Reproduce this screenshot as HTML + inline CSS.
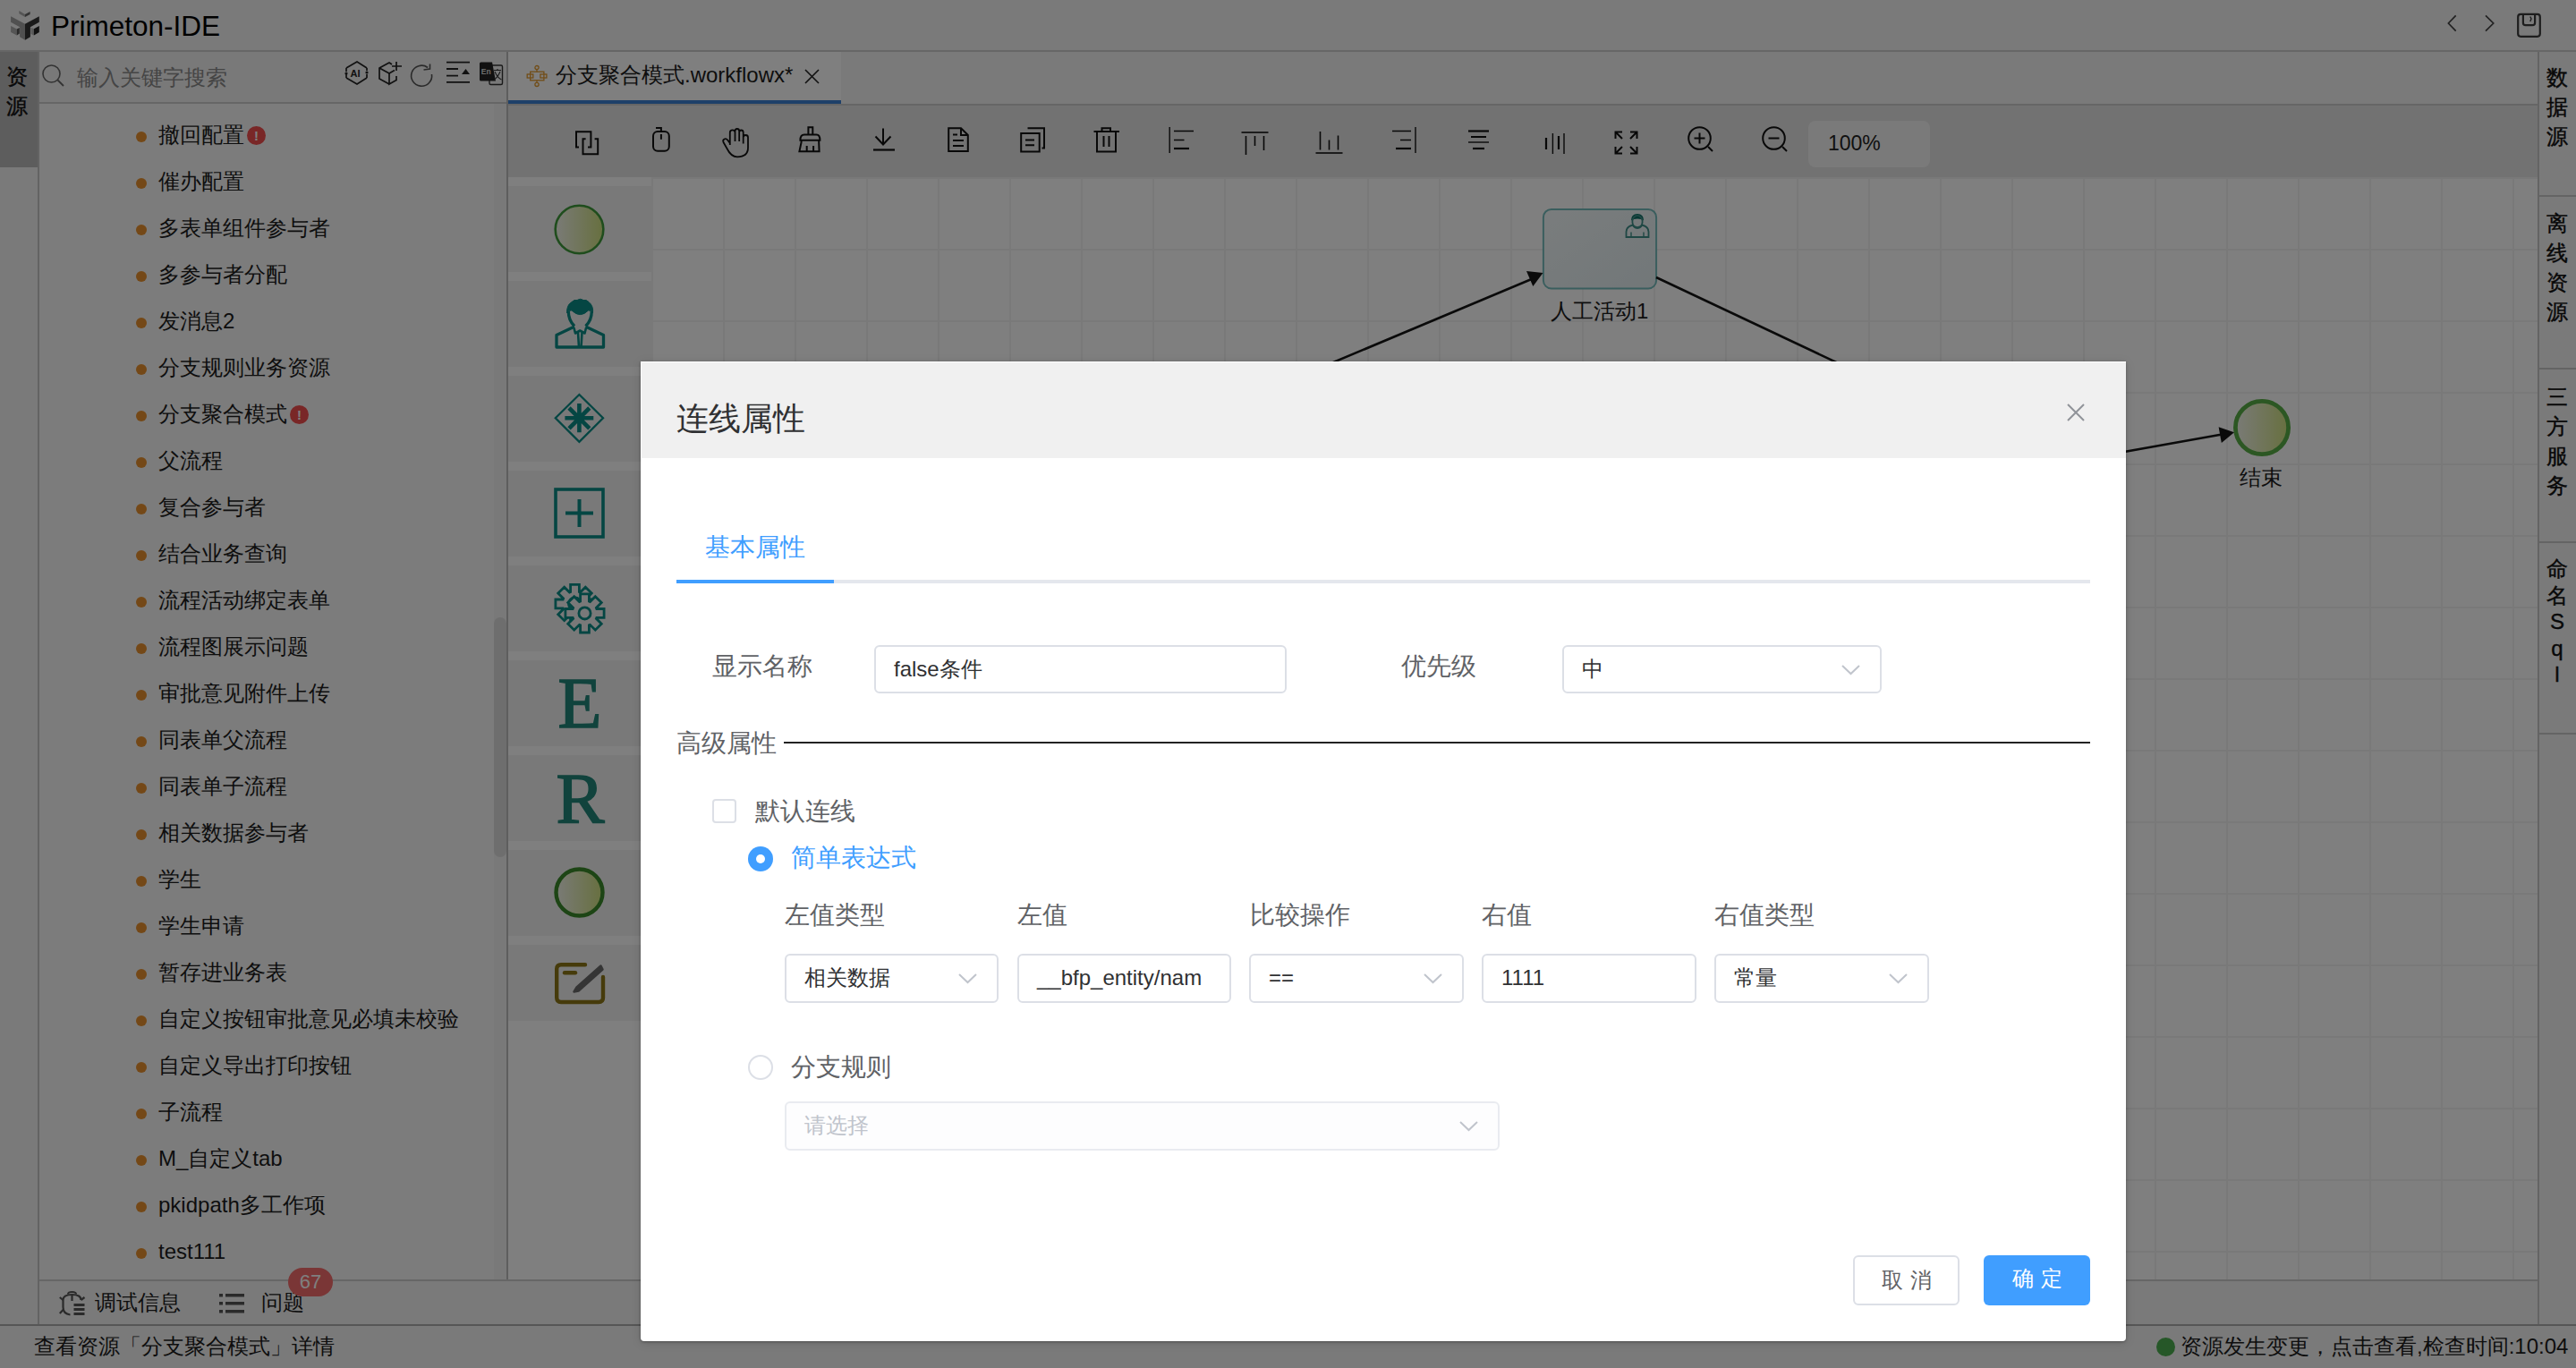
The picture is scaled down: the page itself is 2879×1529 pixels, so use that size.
<!DOCTYPE html>
<html><head><meta charset="utf-8">
<style>
*{box-sizing:border-box}
html,body{margin:0;padding:0}
body{width:2879px;height:1529px;overflow:hidden;position:relative;background:#f4f4f4;font-family:"Liberation Sans",sans-serif;color:#222}
.a{position:absolute}
.nw{white-space:nowrap}
svg{position:absolute;overflow:visible}
#title{left:0;top:0;width:2879px;height:58px;background:#f4f4f4;border-bottom:2px solid #cdcdcd}
#ltabs{left:0;top:58px;width:44px;height:1422px;background:#f4f4f4;border-right:2px solid #c6c6c6}
#ltab1{left:0;top:58px;width:42px;height:129px;background:#bababa}
.vt{font-size:24px;line-height:33px;width:42px;text-align:center;color:#111;-webkit-text-stroke:0.4px #111}
#lpanel{left:44px;top:58px;width:522px;height:1372px;background:#f8f8f8}
#search{left:44px;top:58px;width:522px;height:58px;background:#f2f2f2;border-bottom:2px solid #cdcdcd}
.ph{font-size:24px;color:#8a8a8a;line-height:32px}
.ti{left:152px;font-size:24px;line-height:32px;color:#1c1c1c}
.bul{display:inline-block;width:12px;height:12px;border-radius:50%;background:#e8912e;margin-right:13px;vertical-align:0px}
.badge{display:inline-block;width:21px;height:21px;border-radius:50%;background:#f24f4f;color:#fff;font-size:15px;line-height:21px;text-align:center;font-weight:bold;margin-left:3px;vertical-align:2px}
#sbtrack{left:552px;top:116px;width:14px;height:1314px;background:#f2f2f2}
#sbthumb{left:552px;top:690px;width:14px;height:268px;background:#dcdcdc;border-radius:7px}
#divider{left:566px;top:58px;width:2px;height:1372px;background:#bcbcbc}
#tabbar{left:568px;top:58px;width:2268px;height:60px;background:#f4f4f4;border-bottom:2px solid #cdcdcd}
#tab1{left:568px;top:58px;width:372px;height:58px;background:#fefefe;border-bottom:4px solid #3d80d2}
#toolbar{left:568px;top:118px;width:2268px;height:80px;background:#e4e4e4}
#zoombox{left:2021px;top:135px;width:136px;height:52px;background:#f5f5f5;border-radius:8px;font-size:23px;line-height:50px;padding-left:22px;color:#222}
#canvas{left:568px;top:198px;width:2268px;height:1232px;background-color:#fff;
 background-image:linear-gradient(to right,#f2f2f2 2px,transparent 2px),linear-gradient(to bottom,#f2f2f2 2px,transparent 2px);
 background-size:80px 80px;background-position:0px 0px}
#palette{left:568px;top:198px;width:160px;height:1232px;background:#fefefe}
.pit{left:568px;width:160px;height:96px;background:#f3f3f3}
#rside{left:2836px;top:58px;width:43px;height:1422px;background:#f4f4f4;border-left:2px solid #c8c8c8}
.rsep{left:2838px;width:41px;height:2px;background:#c8c8c8}
#bottom{left:44px;top:1430px;width:2792px;height:50px;background:#f4f4f4;border-top:2px solid #cdcdcd}
#status{left:0;top:1480px;width:2879px;height:49px;background:#f4f4f4;border-top:2px solid #acacac}
.st{font-size:24px;line-height:32px;color:#1c1c1c}
#overlay{left:0;top:0;width:2879px;height:1529px;background:rgba(0,0,0,0.5)}
#modal{left:716px;top:404px;width:1660px;height:1095px;background:#fff;border-radius:0 0 4px 4px;overflow:hidden;box-shadow:0 1px 3px rgba(0,0,0,0.3),0 2px 12px rgba(0,0,0,0.12)}
#mhead{left:1px;top:1px;width:1659px;height:107px;background:#f0f0f0}
.lbl{font-size:28px;line-height:36px;color:#606266}
.inp{height:54px;border:2px solid #dcdfe6;border-radius:6px;background:#fff;font-size:24px;line-height:50px;padding-left:20px;color:#303133}
.dis{border-color:#e9ebf0;background:#fdfdfe;color:#c0c4cc}
.chev{right:22px;top:20px;width:21px;height:11px}
.btn{height:56px;border-radius:6px;font-size:24px;line-height:52px;text-align:center;letter-spacing:8px;text-indent:8px}
</style></head><body>
<div id="title" class="a"></div>
<svg style="left:0;top:0" width="50" height="50" viewBox="0 0 50 50">
<polygon points="21.3,12.1 28,15.9 28,19 21.3,15.2" fill="#aaa"/>
<polygon points="28,15.9 33.6,13.1 33.6,15.9 28,19" fill="#666"/>
<polygon points="12.1,18.2 28,26.7 28,44.8 22.1,41.2 22.1,30.3 12.1,24.7" fill="#a0a0a0"/>
<polygon points="28,26.7 43.8,18.2 43.8,24.7 33.9,30.3 33.9,41.2 28,44.8" fill="#343434"/>
<polygon points="12.1,29 18.8,32.6 18.8,39.5 12.1,35.9" fill="#aaa"/>
<polygon points="18.8,32.6 21.8,31 21.8,37.6 18.8,39.5" fill="#555"/>
<polygon points="34.6,30.7 37.9,32.3 37.9,39.5 34.6,37.9" fill="#b4b4b4"/>
<polygon points="37.9,32.3 43.8,29 43.8,35.9 37.9,39.5" fill="#222"/>
</svg>
<div class="a nw" style="left:57px;top:9px;font-size:31.5px;line-height:40px;color:#000">Primeton-IDE</div>
<svg style="left:2734px;top:16px" width="14" height="20" viewBox="0 0 14 20"><path d="M10.7 1.3 L2.4 10 L10.7 18.6" fill="none" stroke="#444" stroke-width="1.7"/></svg>
<svg style="left:2776px;top:16px" width="14" height="20" viewBox="0 0 14 20"><path d="M2 1.3 L10.7 10 L2 18.6" fill="none" stroke="#444" stroke-width="1.7"/></svg>
<svg style="left:2812px;top:14px" width="28" height="28" viewBox="0 0 28 28"><rect x="2.2" y="1.9" width="24.6" height="24.9" rx="3" fill="none" stroke="#3a3a3a" stroke-width="2.2"/><path d="M7.9 1.9 V11.5 Q7.9 14.2 10.6 14.2 H18.4 Q21.1 14.2 21.1 11.5 V1.9" fill="none" stroke="#3a3a3a" stroke-width="2.2"/><path d="M15.8 4.5 L17 7 L15.8 10" fill="none" stroke="#3a3a3a" stroke-width="1.4"/></svg>
<div id="ltabs" class="a"></div>
<div id="ltab1" class="a"></div>
<div class="a vt" style="left:-2px;top:69px">资<br>源</div>
<div id="lpanel" class="a"></div>
<div id="search" class="a"></div>
<svg style="left:47px;top:72px" width="26" height="26" viewBox="0 0 26 26"><circle cx="10.5" cy="10.5" r="9.5" fill="none" stroke="#666" stroke-width="1.6"/><path d="M17.5 17.5 L24 24" stroke="#666" stroke-width="1.8"/></svg>
<div class="a nw ph" style="left:86px;top:71px">输入关键字搜索</div>
<svg style="left:385px;top:68px" width="28" height="28" viewBox="0 0 28 28">
<path d="M2 8 L14 1 L25 8" fill="none" stroke="#222" stroke-width="1.7"/>
<path d="M2 19 L14 26 L25 19" fill="none" stroke="#222" stroke-width="1.7"/>
<path d="M2 8 V12" stroke="#222" stroke-width="1.7"/><path d="M2 15 V19" stroke="#222" stroke-width="1.7"/>
<path d="M25 8 V11" stroke="#222" stroke-width="1.7"/><path d="M25 15 V19" stroke="#222" stroke-width="1.7"/>
<circle cx="2" cy="14" r="1.6" fill="#222"/><circle cx="25" cy="13" r="1.6" fill="#222"/>
<text x="6.5" y="18" font-family="Liberation Sans" font-weight="bold" font-size="11" fill="#222">AI</text>
</svg>
<svg style="left:422px;top:68px" width="28" height="28" viewBox="0 0 28 28">
<path d="M13 26 L2 20 V8 L13 2 L16 4" fill="none" stroke="#222" stroke-width="1.7" stroke-linejoin="round"/>
<path d="M2 8 L13 14 L19 10.5" fill="none" stroke="#222" stroke-width="1.7"/>
<path d="M13 14 V26 L21 21.5 V17" fill="none" stroke="#222" stroke-width="1.7"/>
<path d="M21 1 V11 M16 6 H27" stroke="#222" stroke-width="1.7"/>
</svg>
<svg style="left:459px;top:71px" width="28" height="28" viewBox="0 0 28 28">
<path d="M23.5 12 A11.5 11.5 0 1 1 19 4.5" fill="none" stroke="#555" stroke-width="1.6"/>
<path d="M14.5 7 L21.5 6 L21.5 0.5" fill="none" stroke="#555" stroke-width="1.6"/>
</svg>
<svg style="left:498px;top:68px" width="28" height="26" viewBox="0 0 28 26">
<path d="M1 1.7 H27 M1 9 H14 M1 16.7 H14 M1 23.8 H27" stroke="#222" stroke-width="1.8"/>
<path d="M18 15 L22.5 9 L27 15 Z" fill="#222"/>
</svg>
<svg style="left:535px;top:69px" width="28" height="27" viewBox="0 0 28 27">
<rect x="12" y="4" width="14.5" height="21.5" rx="1.5" fill="none" stroke="#333" stroke-width="1.4"/>
<path d="M2.5 0.5 H15 L19 21.5 H2.5 Q1 21.5 1 20 V2 Q1 0.5 2.5 0.5 Z" fill="#222"/>
<text x="2.8" y="14" font-family="Liberation Sans" font-size="8.5" fill="#ddd" font-weight="bold">En</text>
<path d="M17 9.5 H25 M21 8 V10 M18 11 Q21 18 25.5 20 M24 11 Q21 18 17 20" fill="none" stroke="#333" stroke-width="1.1"/>
</svg>
<div class="ti a nw" style="top:135px"><i class="bul"></i>撤回配置<span class="badge">!</span></div>
<div class="ti a nw" style="top:187px"><i class="bul"></i>催办配置</div>
<div class="ti a nw" style="top:239px"><i class="bul"></i>多表单组件参与者</div>
<div class="ti a nw" style="top:291px"><i class="bul"></i>多参与者分配</div>
<div class="ti a nw" style="top:343px"><i class="bul"></i>发消息2</div>
<div class="ti a nw" style="top:395px"><i class="bul"></i>分支规则业务资源</div>
<div class="ti a nw" style="top:447px"><i class="bul"></i>分支聚合模式<span class="badge">!</span></div>
<div class="ti a nw" style="top:499px"><i class="bul"></i>父流程</div>
<div class="ti a nw" style="top:551px"><i class="bul"></i>复合参与者</div>
<div class="ti a nw" style="top:603px"><i class="bul"></i>结合业务查询</div>
<div class="ti a nw" style="top:655px"><i class="bul"></i>流程活动绑定表单</div>
<div class="ti a nw" style="top:707px"><i class="bul"></i>流程图展示问题</div>
<div class="ti a nw" style="top:759px"><i class="bul"></i>审批意见附件上传</div>
<div class="ti a nw" style="top:811px"><i class="bul"></i>同表单父流程</div>
<div class="ti a nw" style="top:863px"><i class="bul"></i>同表单子流程</div>
<div class="ti a nw" style="top:915px"><i class="bul"></i>相关数据参与者</div>
<div class="ti a nw" style="top:967px"><i class="bul"></i>学生</div>
<div class="ti a nw" style="top:1019px"><i class="bul"></i>学生申请</div>
<div class="ti a nw" style="top:1071px"><i class="bul"></i>暂存进业务表</div>
<div class="ti a nw" style="top:1123px"><i class="bul"></i>自定义按钮审批意见必填未校验</div>
<div class="ti a nw" style="top:1175px"><i class="bul"></i>自定义导出打印按钮</div>
<div class="ti a nw" style="top:1227px"><i class="bul"></i>子流程</div>
<div class="ti a nw" style="top:1279px"><i class="bul"></i>M_自定义tab</div>
<div class="ti a nw" style="top:1331px"><i class="bul"></i>pkidpath多工作项</div>
<div class="ti a nw" style="top:1383px"><i class="bul"></i>test111</div>
<div id="sbtrack" class="a"></div><div id="sbthumb" class="a"></div>
<div id="divider" class="a"></div>
<div id="tabbar" class="a"></div>
<div id="tab1" class="a"></div>
<svg style="left:588px;top:72px" width="24" height="26" viewBox="0 0 24 26">
<g fill="none" stroke="#e39a2e" stroke-width="1.3">
<circle cx="12" cy="3.6" r="2.1"/><path d="M12 5.7 V8.2"/>
<rect x="4.7" y="8.2" width="15.2" height="9.6"/>
<rect x="1.2" y="11" width="6.6" height="4"/>
<rect x="15.9" y="11" width="7" height="4"/>
<path d="M12 17.8 V20.3"/><circle cx="12" cy="22.4" r="2.1"/>
</g></svg>
<div class="a nw" style="left:621px;top:68px;font-size:24px;line-height:32px;color:#1c1c1c">分支聚合模式.workflowx*</div>
<svg style="left:899px;top:77px" width="17" height="17" viewBox="0 0 17 17"><path d="M1 1 L16 16 M16 1 L1 16" stroke="#222" stroke-width="1.6"/></svg>
<div id="toolbar" class="a"></div>
<svg style="left:643px;top:146px" width="27" height="28" viewBox="0 0 27 28"><path d="M4 18.4 H1 V1.3 H17.4 V18.4 H14" fill="none" stroke="#111" stroke-width="2"/><path d="M11.6 9.2 H8.5 V26.3 H25.2 V9.2 H21.6" fill="none" stroke="#111" stroke-width="2"/></svg>
<svg style="left:728px;top:141px" width="22" height="29" viewBox="0 0 22 29"><rect x="2" y="5.9" width="17.8" height="21.8" rx="5" fill="none" stroke="#111" stroke-width="2"/><path d="M10.9 9 V14.8" fill="none" stroke="#111" stroke-width="2"/><path d="M10.9 5.5 V2 H5" fill="none" stroke="#111" stroke-width="2"/></svg>
<svg style="left:806px;top:143px" width="32" height="34" viewBox="0 0 32 34"><path d="M9.8 19 V5 Q9.8 2.3 12.7 2.3 Q15.5 2.3 15.5 5 V15 M15.5 5 V3.5 Q15.5 1 17.8 1 Q20.2 1 20.2 3.5 V15 M20.2 5 Q20.2 2.5 22.4 2.5 Q24.7 2.5 24.7 5 V17.5 M24.7 10.5 Q24.7 8 27.3 8 Q30 8 30 10.5 V22 Q30 32.3 18 32.3 Q11 32.3 6.5 23 L2.5 16 Q1.5 13.5 3.5 12.5 Q5.5 11.5 7.2 13.5 L9.8 17" fill="none" stroke="#111" stroke-width="1.8" stroke-linejoin="round"/></svg>
<svg style="left:892px;top:141px" width="26" height="30" viewBox="0 0 26 30"><path d="M11.4 9.5 V1.3 H16.3 V9.5 M2.4 15.8 Q2.4 9.5 7 9.5 H20.5 Q24.4 9.5 24.4 15.8 Z M3.6 15.8 V18 L1.4 28.2 H23.6 L23.2 18 V15.8 M9.7 22 V28 M17.1 22 V28" fill="none" stroke="#111" stroke-width="2"/></svg>
<svg style="left:976px;top:143px" width="24" height="26" viewBox="0 0 24 26"><path d="M11 0.5 V18 M2.5 9.5 L11 18.5 L19.5 9.5" fill="none" stroke="#111" stroke-width="2"/><path d="M0 24.5 H24" fill="none" stroke="#111" stroke-width="2.2"/></svg>
<svg style="left:1059px;top:142px" width="24" height="28" viewBox="0 0 24 28"><path d="M1.2 1.2 H15 L22.8 9 V27 H1.2 Z M15 1.2 V9 H22.8" fill="none" stroke="#111" stroke-width="2"/><path d="M6 8.5 H11 M6 15 H18 M6 21 H18" fill="none" stroke="#111" stroke-width="2"/></svg>
<svg style="left:1140px;top:142px" width="28" height="28" viewBox="0 0 28 28"><path d="M8.5 1.2 H27 V23.5 H24.5" fill="none" stroke="#111" stroke-width="2"/><rect x="1.2" y="7" width="20.5" height="20.5" fill="none" stroke="#111" stroke-width="2"/><path d="M6 14.5 H16 M6 20.2 H16" fill="none" stroke="#111" stroke-width="2"/></svg>
<svg style="left:1222px;top:142px" width="30" height="28" viewBox="0 0 30 28"><path d="M0.5 5 H29 M9.5 5 V1.2 H19 V5 M4 5 V27.5 H25 V5" fill="none" stroke="#111" stroke-width="2"/><path d="M11.5 10 V22 M17.5 10 V22" fill="none" stroke="#111" stroke-width="2"/></svg>
<svg style="left:1306px;top:142px" width="29" height="29" viewBox="0 0 29 29"><path d="M1.2 0 V29" stroke="#111" stroke-width="1.4"/><path d="M6 4.5 H28 M6 14.5 H17.5" stroke="#111" stroke-width="1.4"/><path d="M6 24 H23" stroke="#111" stroke-width="2.2"/></svg>
<svg style="left:1387px;top:147px" width="31" height="26" viewBox="0 0 31 26"><path d="M0.5 1 H30.5" stroke="#111" stroke-width="1.6"/><path d="M5.5 5 V26 M15.5 5 V16 M25.5 5 V21" stroke="#111" stroke-width="1.6"/></svg>
<svg style="left:1470px;top:146px" width="31" height="26" viewBox="0 0 31 26"><path d="M0.5 25 H30.5" stroke="#111" stroke-width="1.6"/><path d="M5.5 1 V21.5 M15.5 10.5 V21.5 M25.5 5.5 V21.5" stroke="#111" stroke-width="1.6"/></svg>
<svg style="left:1555px;top:142px" width="28" height="29" viewBox="0 0 28 29"><path d="M27 0 V29" stroke="#111" stroke-width="1.4"/><path d="M1 4.5 H22 M10 14.5 H22" stroke="#111" stroke-width="1.4"/><path d="M5 24 H22" stroke="#111" stroke-width="2.2"/></svg>
<svg style="left:1640px;top:145px" width="25" height="23" viewBox="0 0 25 23"><path d="M1 1.5 H24" stroke="#111" stroke-width="2.2"/><path d="M4 8 H21" stroke="#111" stroke-width="2"/><path d="M1 14 H24" stroke="#111" stroke-width="1.4"/><path d="M6 21 H19" stroke="#111" stroke-width="2.2"/></svg>
<svg style="left:1726px;top:148px" width="24" height="25" viewBox="0 0 24 25"><path d="M2 6 V19 M16 4 V19" stroke="#111" stroke-width="2.2"/><path d="M9.4 1 V24 M22 1 V24" stroke="#111" stroke-width="1.4"/></svg>
<svg style="left:1804px;top:146px" width="27" height="27" viewBox="0 0 27 27"><path d="M1.5 9 V1.5 H9 M1.5 1.5 L9 9 M18 1.5 H25.5 V9 M25.5 1.5 L18 9 M1.5 18 V25.5 H9 M1.5 25.5 L9 18 M25.5 18 V25.5 H18 M25.5 25.5 L18 18" fill="none" stroke="#111" stroke-width="2"/></svg>
<svg style="left:1886px;top:141px" width="29" height="29" viewBox="0 0 29 29"><circle cx="13.5" cy="13.5" r="12.3" fill="none" stroke="#111" stroke-width="2"/><path d="M23 23 L28 28" fill="none" stroke="#111" stroke-width="2"/><path d="M13.5 7.5 V19.5 M7.5 13.5 H19.5" fill="none" stroke="#111" stroke-width="2"/></svg>
<svg style="left:1969px;top:141px" width="29" height="29" viewBox="0 0 29 29"><circle cx="13.5" cy="13.5" r="12.3" fill="none" stroke="#111" stroke-width="2"/><path d="M23 23 L28 28" fill="none" stroke="#111" stroke-width="2"/><path d="M7.5 13.5 H19.5" fill="none" stroke="#111" stroke-width="2"/></svg>
<div id="zoombox" class="a nw">100%</div><div id="canvas" class="a"></div>
<div id="palette" class="a"></div>
<div class="a pit" style="top:208px;height:96px"></div>
<div class="a pit" style="top:314px;height:96px"></div>
<div class="a pit" style="top:420px;height:96px"></div>
<div class="a pit" style="top:526px;height:96px"></div>
<div class="a pit" style="top:632px;height:96px"></div>
<div class="a pit" style="top:738px;height:96px"></div>
<div class="a pit" style="top:844px;height:96px"></div>
<div class="a pit" style="top:950px;height:96px"></div>
<div class="a pit" style="top:1056px;height:85px"></div>
<svg style="left:0;top:0" width="1" height="1"><defs>
<linearGradient id="gEv" x1="0" y1="0" x2="1" y2="0"><stop offset="0" stop-color="#f4f6ee"/><stop offset="1" stop-color="#cfe07e"/></linearGradient>
<linearGradient id="gAct" x1="0" y1="0" x2="1" y2="1"><stop offset="0" stop-color="#f4fafb"/><stop offset="1" stop-color="#e4eff2"/></linearGradient>
</defs></svg>
<svg style="left:619px;top:228px" width="57" height="57" viewBox="0 0 57 57"><circle cx="28.5" cy="28.5" r="26.8" fill="url(#gEv)" stroke="#3f9a3a" stroke-width="2.6"/></svg>
<svg style="left:619px;top:333px" width="58" height="58" viewBox="0 0 58 58">
<g fill="none" stroke="#0a8c86" stroke-width="3.3" stroke-linejoin="round">
<path d="M14.7 17 Q14 8 20 4.5 Q23 1.5 26 2.5 Q29.6 0 33 2.5 Q36 1.5 39 4.5 Q44.5 9 43.5 17 Q41 13.5 38.6 13.9 Q34 18.6 29.3 18.6 Q24.5 18.6 20 13.9 Q17 13.5 14.7 17 Z" fill="#0a8c86" stroke-width="1"/>
<path d="M16.3 15 Q16.3 25 23 31.5 M42.3 15 Q42.3 25 35.5 31.5"/>
<path d="M23 32 L3 41.5 V55 H55.5 V41.5 L35.5 32"/>
<path d="M22.5 33.5 L24 39.5 L29.2 36.5 L34.5 39.5 L36 33.5" stroke-width="2.6"/>
<path d="M27 38.5 L28 55 M31.5 38.5 L30.5 55" stroke-width="2.6"/>
</g></svg>
<svg style="left:619px;top:439px" width="57" height="57" viewBox="0 0 57 57">
<path d="M28.4 2 L55 28.3 L28.4 54.8 L1.8 28.3 Z" fill="none" stroke="#0a8c86" stroke-width="2.3"/>
<g stroke="#0a8c86" stroke-width="4.6"><path d="M28.4 12 V44.3 M12.4 28.3 H44.3 M17 17 L39.8 39.8 M39.8 17 L17 39.8"/></g>
</svg>
<svg style="left:619px;top:545px" width="57" height="57" viewBox="0 0 57 57">
<rect x="2" y="2" width="53" height="53" fill="none" stroke="#0a8c86" stroke-width="3.6"/>
<path d="M28.5 13 V44 M13 28.5 H44" stroke="#0a8c86" stroke-width="4"/>
</svg>
<svg style="left:615px;top:647px" width="66" height="66" viewBox="0 0 66 66">
<g stroke="#0a8c86" stroke-linejoin="miter" fill="none">
<path d="M40.83 23.00 L49.10 23.00 L49.10 32.80 L40.83 32.80 L40.39 33.86 L46.24 39.71 L39.31 46.64 L33.46 40.79 L32.40 41.23 L32.40 49.50 L22.60 49.50 L22.60 41.23 L21.54 40.79 L15.69 46.64 L8.76 39.71 L14.61 33.86 L14.17 32.80 L5.90 32.80 L5.90 23.00 L14.17 23.00 L14.61 21.94 L8.76 16.09 L15.69 9.16 L21.54 15.01 L22.60 14.57 L22.60 6.30 L32.40 6.30 L32.40 14.57 L33.46 15.01 L39.31 9.16 L46.24 16.09 L40.39 21.94 Z" stroke-width="2.8"/>
<circle cx="27.5" cy="27.9" r="6.6" stroke-width="3.6"/>
<path d="M51.83 33.50 L60.10 33.50 L60.10 43.30 L51.83 43.30 L51.39 44.36 L57.24 50.21 L50.31 57.14 L44.46 51.29 L43.40 51.73 L43.40 60.00 L33.60 60.00 L33.60 51.73 L32.54 51.29 L26.69 57.14 L19.76 50.21 L25.61 44.36 L25.17 43.30 L16.90 43.30 L16.90 33.50 L25.17 33.50 L25.61 32.44 L19.76 26.59 L26.69 19.66 L32.54 25.51 L33.60 25.07 L33.60 16.80 L43.40 16.80 L43.40 25.07 L44.46 25.51 L50.31 19.66 L57.24 26.59 L51.39 32.44 Z" fill="#f3f3f3" stroke-width="2.8"/>
<circle cx="38.5" cy="38.4" r="6.6" stroke-width="2.8"/>
</g></svg>
<div class="a nw" style="left:620px;top:744px;width:56px;text-align:center;font-family:'Liberation Serif',serif;font-size:80px;line-height:84px;color:#22877a;-webkit-text-stroke:1.6px #22877a">E</div>
<div class="a nw" style="left:620px;top:851px;width:57px;text-align:center;font-family:'Liberation Serif',serif;font-size:81px;line-height:84px;color:#22877a;-webkit-text-stroke:1.6px #22877a">R</div>
<svg style="left:619px;top:969px" width="57" height="57" viewBox="0 0 57 57"><circle cx="28.5" cy="28.5" r="26" fill="url(#gEv)" stroke="#3a8a2a" stroke-width="4.4"/></svg>
<svg style="left:619px;top:1075px" width="58" height="48" viewBox="0 0 58 48">
<path d="M35 3.2 H8 Q3.2 3.2 3.2 8 V40 Q3.2 45 8 45 H50 Q55 45 55 40 V17" fill="none" stroke="#8c7616" stroke-width="4.4" stroke-linecap="round"/>
<path d="M12 12.2 H24" stroke="#8c7616" stroke-width="4.4" stroke-linecap="round"/>
<path d="M52.5 4.5 L25.5 28.5 L22.5 33.5 L27.5 32.5 L54.5 8.5 Z" fill="#6a6a6a" stroke="#6a6a6a" stroke-width="2.5" stroke-linejoin="round"/>
</svg>
<svg style="left:1723px;top:232px" width="130" height="93" viewBox="0 0 130 93">
<rect x="1.9" y="1.9" width="126.2" height="88.6" rx="9" fill="url(#gAct)" stroke="#74bcbc" stroke-width="2"/>
<g transform="translate(93,6.5)">
<path d="M7 8 Q7 0.5 14 0.5 Q21 0.5 21 8 Q18.5 6 14 6 Q9.5 6 7 8 Z" fill="#0a6e64"/>
<ellipse cx="14" cy="9.5" rx="5.6" ry="7.2" fill="none" stroke="#3f8f88" stroke-width="1.8"/>
<path d="M1.5 26.5 V20.5 Q1.5 15 8.5 13.2 Q14 18 19.5 13.2 Q26.5 15 26.5 20.5 V26.5 Z" fill="none" stroke="#3f8f88" stroke-width="1.8"/>
<path d="M7 21 V26 M21 21 V26" stroke="#3f8f88" stroke-width="1.4"/>
</g></svg>
<div class="a nw" style="left:1733px;top:332px;font-size:24px;line-height:32px;color:#1c1c1c">人工活动1</div>
<svg style="left:2495px;top:444px" width="66" height="66" viewBox="0 0 66 66"><circle cx="33" cy="34" r="29.6" fill="url(#gEv)" stroke="#58ae46" stroke-width="4.8"/></svg>
<div class="a nw" style="left:2503px;top:518px;font-size:24px;line-height:32px;color:#1c1c1c">结束</div>
<svg style="left:0;top:0" width="2879" height="1529" viewBox="0 0 2879 1529">
<g stroke="#151515" stroke-width="2.6" fill="none">
<path d="M1300 484.8 L1711 312.2"/>
<path d="M1851 310 L2200 474.5"/>
<path d="M2200 536 L2482 485.8"/>
</g>
<path d="M1724.5 305 L1706 303 L1713.3 320 Z" fill="#151515"/>
<path d="M2497 483.2 L2479.6 477.2 L2482.8 495 Z" fill="#151515"/>
</svg>
<div id="rside" class="a"></div>
<div class="a rsep" style="top:218px"></div>
<div class="a rsep" style="top:411px"></div>
<div class="a rsep" style="top:605px"></div>
<div class="a rsep" style="top:819px"></div>
<div class="a vt" style="left:2838px;top:70px;width:40px">数<br>据<br>源</div>
<div class="a vt" style="left:2838px;top:233px;width:40px">离<br>线<br>资<br>源</div>
<div class="a vt" style="left:2838px;top:427px;width:40px">三<br>方<br>服<br>务</div>
<div class="a vt" style="left:2838px;top:621px;width:40px;line-height:29.5px">命<br>名<br>S<br>q<br>l</div>
<div id="bottom" class="a"></div>
<svg style="left:66px;top:1443px" width="30" height="28" viewBox="0 0 30 28">
<g fill="none" stroke="#555" stroke-width="2.2">
<path d="M10 3.5 Q10 1 14.5 1 Q19 1 19 3.5"/>
<path d="M4.5 10 Q4.5 4 14.5 4 Q24.5 4 24.5 10 M4.5 10 V18 Q4.5 25.5 12.5 26.5"/>
<path d="M14.5 4 V11"/>
<path d="M0.8 7 L4.5 10 M0.8 25 L4.5 21 M24.5 10 L28.5 7"/>
<path d="M16.5 15.5 H28.5 M16.5 20.5 H28.5 M16.5 25.5 H28.5" stroke-width="2.8"/>
</g></svg>
<div class="a nw st" style="left:106px;top:1440px">调试信息</div>
<svg style="left:245px;top:1445px" width="29" height="24" viewBox="0 0 29 24">
<g fill="#555"><rect x="0" y="1" width="4" height="3.5"/><rect x="0" y="10" width="4" height="3.5"/><rect x="0" y="19" width="4" height="3.5"/>
<rect x="7" y="1" width="21" height="3.5"/><rect x="7" y="10" width="21" height="3.5"/><rect x="7" y="19" width="21" height="3.5"/></g></svg>
<div class="a nw st" style="left:292px;top:1440px">问题</div>
<div class="a nw" style="left:322px;top:1417px;width:50px;height:32px;border-radius:16px;background:#f56c6c;color:#fff;font-size:22px;line-height:32px;text-align:center">67</div>
<div id="status" class="a"></div>
<div class="a nw st" style="left:38px;top:1489px">查看资源「分支聚合模式」详情</div>
<div class="a" style="left:2410px;top:1495px;width:21px;height:21px;border-radius:50%;background:#4caf50"></div>
<div class="a nw st" style="left:2437px;top:1489px">资源发生变更，点击查看,检查时间:10:04</div>
<div id="overlay" class="a"></div><div id="modal" class="a">
<div id="mhead" class="a"></div>
<div class="a nw" style="left:40px;top:40px;font-size:36px;line-height:48px;color:#303133">连线属性</div>
<svg style="left:1594px;top:47px" width="20" height="20" viewBox="0 0 20 20"><path d="M1 1 L19 19 M19 1 L1 19" stroke="#909399" stroke-width="2"/></svg>
<div class="a nw" style="left:72px;top:190px;font-size:28px;line-height:36px;color:#409eff">基本属性</div>
<div class="a" style="left:40px;top:244px;width:1580px;height:4px;background:#e4e7ed"></div>
<div class="a" style="left:40px;top:244px;width:176px;height:4px;background:#409eff"></div>
<div class="a nw lbl" style="left:80px;top:323px">显示名称</div>
<div class="a nw inp" style="left:261px;top:317px;width:461px">false条件</div>
<div class="a nw lbl" style="left:850px;top:323px">优先级</div>
<div class="a nw inp" style="left:1030px;top:317px;width:357px">中<svg class="chev" style="position:absolute" width="21" height="11" viewBox="0 0 21 11"><path d="M1 1 L10.5 10 L20 1" fill="none" stroke="#c0c4cc" stroke-width="2"/></svg></div>
<div class="a nw lbl" style="left:40px;top:409px">高级属性</div>
<div class="a" style="left:160px;top:425px;width:1460px;height:2px;background:#222"></div>
<div class="a" style="left:80px;top:489px;width:27px;height:27px;border:2px solid #dcdfe6;border-radius:4px;background:#fff"></div>
<div class="a nw lbl" style="left:128px;top:485px">默认连线</div>
<div class="a" style="left:120px;top:542px;width:28px;height:28px;border-radius:50%;background:#409eff"></div>
<div class="a" style="left:129px;top:551px;width:10px;height:10px;border-radius:50%;background:#fff"></div>
<div class="a nw lbl" style="left:168px;top:537px;color:#409eff">简单表达式</div>
<div class="a nw lbl" style="left:161px;top:601px">左值类型</div>
<div class="a nw lbl" style="left:421px;top:601px">左值</div>
<div class="a nw lbl" style="left:681px;top:601px">比较操作</div>
<div class="a nw lbl" style="left:940px;top:601px">右值</div>
<div class="a nw lbl" style="left:1200px;top:601px">右值类型</div>
<div class="a nw inp" style="left:161px;top:662px;width:239px;height:55px">相关数据<svg class="chev" style="position:absolute" width="21" height="11" viewBox="0 0 21 11"><path d="M1 1 L10.5 10 L20 1" fill="none" stroke="#c0c4cc" stroke-width="2"/></svg></div>
<div class="a nw inp" style="left:421px;top:662px;width:239px;height:55px">__bfp_entity/nam</div>
<div class="a nw inp" style="left:680px;top:662px;width:240px;height:55px">==<svg class="chev" style="position:absolute" width="21" height="11" viewBox="0 0 21 11"><path d="M1 1 L10.5 10 L20 1" fill="none" stroke="#c0c4cc" stroke-width="2"/></svg></div>
<div class="a nw inp" style="left:940px;top:662px;width:240px;height:55px">1111</div>
<div class="a nw inp" style="left:1200px;top:662px;width:240px;height:55px">常量<svg class="chev" style="position:absolute" width="21" height="11" viewBox="0 0 21 11"><path d="M1 1 L10.5 10 L20 1" fill="none" stroke="#c0c4cc" stroke-width="2"/></svg></div>
<div class="a" style="left:120px;top:775px;width:28px;height:28px;border-radius:50%;border:2px solid #dcdfe6;background:#fff"></div>
<div class="a nw lbl" style="left:168px;top:771px">分支规则</div>
<div class="a nw inp dis" style="left:161px;top:827px;width:799px;height:55px">请选择<svg class="chev" style="position:absolute" width="21" height="11" viewBox="0 0 21 11"><path d="M1 1 L10.5 10 L20 1" fill="none" stroke="#c0c4cc" stroke-width="2"/></svg></div>
<div class="a nw btn" style="left:1355px;top:999px;width:119px;border:2px solid #dcdfe6;background:#fff;color:#606266">取消</div>
<div class="a nw btn" style="left:1501px;top:999px;width:119px;background:#409eff;color:#fff">确定</div>
</div></body></html>
